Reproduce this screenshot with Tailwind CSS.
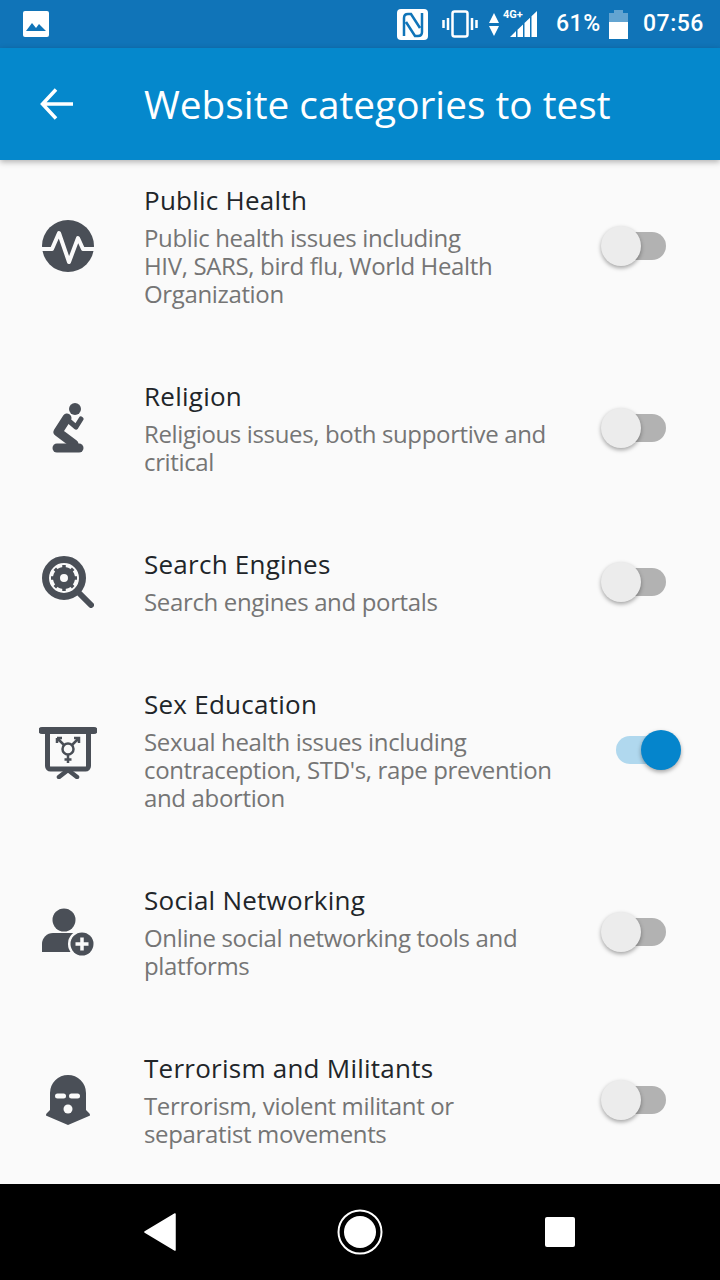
<!DOCTYPE html>
<html lang="en">
<head>
  <meta charset="UTF-8" />
  <meta name="viewport" content="width=device-width, initial-scale=1.0"/>
  <title>Website categories to test</title>
  <script src="https://cdn.jsdelivr.net/npm/@tailwindcss/browser@4"></script>
</head>
<body class="bg-[#fafafa] font-['Open_Sans',sans-serif]">
  <div class="w-[720px] h-[1280px] flex flex-col overflow-hidden">

    <!-- status bar -->
    <div class="h-12 shrink-0 bg-[#1074b8] flex items-center pl-[23px] pr-[17px] text-white font-['Roboto',sans-serif] text-[23px] font-medium tracking-[0.5px]">
      <svg width="26" height="26" viewBox="0 0 26 26"><rect width="26" height="26" rx="2" fill="#fff"/><path d="M3 20l6-8 4 5 3-4 7 7z" fill="#1074b8"/></svg>
      <svg class="ml-auto" width="31" height="31" viewBox="0 0 31 31"><rect width="31" height="31" rx="4" fill="#fff"/><path d="M7 27V9q0-4 4-4h3l9 14M25 4v19q0 4-4 4h-3L9 13" fill="none" stroke="#1074b8" stroke-width="2.500"/></svg>
      <svg class="ml-[14px]" width="36" height="28" viewBox="0 0 36 28"><rect x="10.500" y="1.500" width="15" height="25" rx="2" fill="none" stroke="#fff" stroke-width="2.500"/><path d="M6 8v12M1.500 10v8M30 8v12M34.500 10v8" stroke="#fff" stroke-width="2.500"/></svg>
      <div class="relative ml-[11px] w-12 h-[30px]">
        <svg width="48" height="30" viewBox="0 0 48 30"><path d="M5 4l5 10H0zM5 27l5-10H0z" fill="#fff"/><path d="M21 28l6-6v6zM28.500 20.800V28H34V15.500zM35.500 14v14H41V8.700zM42.500 7.300V28H48V2z" fill="#fff"/></svg>
        <span class="absolute left-[14px] top-[-1px] text-[11px] leading-[13px] font-bold tracking-normal">4G+</span>
      </div>
      <span class="ml-[19px] w-[44px] pt-px whitespace-nowrap">61%</span>
      <svg class="ml-[9px]" width="19" height="29" viewBox="0 0 19 29"><path d="M5 0h9v3h5v9H0V3h5z" fill="#fff" fill-opacity=".35"/><rect y="12" width="19" height="17" fill="#fff"/></svg>
      <span class="ml-[15px] pt-px w-[60px] whitespace-nowrap">07:56</span>
    </div>

    <!-- header -->
    <div class="h-28 shrink-0 bg-[#0588cc] flex items-center shadow-[0_2px_6px_rgba(0,0,0,0.3)] relative z-10">
      <svg class="ml-10" width="34" height="32" viewBox="0 0 34 32" fill="none" stroke="#fff" stroke-width="3.500"><path d="M33 16H3M16 1.500L2.500 16 16 30.500"/></svg>
      <h1 class="ml-[70px] text-white text-[38.8px] font-normal whitespace-nowrap">Website categories to test</h1>
    </div>

    <!-- list -->
    <div class="flex-1 overflow-hidden pt-6">

      <div class="flex items-center pb-[72px]">
        <div class="w-[144px] shrink-0 flex justify-center pr-[8px]">
          <svg width="52" height="52" viewBox="0 0 52 52"><circle cx="26" cy="26" r="26" fill="#4a4f57"/><path d="M0 29h10l7-16 10 29 9-24 5 11h11" fill="none" stroke="#fafafa" stroke-width="4" stroke-linejoin="round"/></svg>
        </div>
        <div class="flex-1">
          <div class="text-[26px] leading-8 tracking-[0.25px] text-[#212529] mb-2">Public Health</div>
          <div class="text-[24px] leading-7 tracking-[-0.35px] text-[#757575]">Public health issues including<br>HIV, SARS, bird flu, World Health<br>Organization</div>
        </div>
        <div class="relative w-[81px] h-10 mr-[39px] shrink-0">
          <div class="absolute left-4 top-1.5 w-[50px] h-7 rounded-full bg-[#b2b2b2]"></div>
          <div class="absolute left-px top-0 size-10 rounded-full bg-[#ececec] shadow-[0_2px_4px_rgba(0,0,0,0.35)]"></div>
        </div>
      </div>

      <div class="flex items-center pb-[72px]">
        <div class="w-[144px] shrink-0 flex justify-center pr-[8px]">
          <svg width="52" height="52" viewBox="0 0 52 52" fill="none" stroke="#4a4f57" stroke-linecap="round" stroke-linejoin="round"><circle cx="33" cy="7" r="6" fill="#4a4f57" stroke="none"/><path d="M25 16L16 30l16 12" stroke-width="9"/><path d="M15 46h22" stroke-width="9"/><path d="M27 19l7 6 5-8" stroke-width="5"/></svg>
        </div>
        <div class="flex-1">
          <div class="text-[26px] leading-8 tracking-[0.25px] text-[#212529] mb-2">Religion</div>
          <div class="text-[24px] leading-7 tracking-[-0.35px] text-[#757575]">Religious issues, both supportive and<br>critical</div>
        </div>
        <div class="relative w-[81px] h-10 mr-[39px] shrink-0">
          <div class="absolute left-4 top-1.5 w-[50px] h-7 rounded-full bg-[#b2b2b2]"></div>
          <div class="absolute left-px top-0 size-10 rounded-full bg-[#ececec] shadow-[0_2px_4px_rgba(0,0,0,0.35)]"></div>
        </div>
      </div>

      <div class="flex items-center pb-[72px]">
        <div class="w-[144px] shrink-0 flex justify-center pr-[8px]">
          <svg width="52" height="52" viewBox="0 0 52 52" fill="none" stroke="#4a4f57" stroke-linecap="round"><circle cx="22" cy="22" r="18.500" stroke-width="7"/><path d="M36 36l13 13" stroke-width="6"/><circle cx="22" cy="22" r="7.500" stroke-width="7"/><path d="M22 9v26M9 22h26M12.800 12.800l18.400 18.400M31.200 12.800L12.800 31.200" stroke-width="3.500" stroke-linecap="butt" stroke-dasharray="4 18"/></svg>
        </div>
        <div class="flex-1">
          <div class="text-[26px] leading-8 tracking-[0.25px] text-[#212529] mb-2">Search Engines</div>
          <div class="text-[24px] leading-7 tracking-[-0.35px] text-[#757575]">Search engines and portals</div>
        </div>
        <div class="relative w-[81px] h-10 mr-[39px] shrink-0">
          <div class="absolute left-4 top-1.5 w-[50px] h-7 rounded-full bg-[#b2b2b2]"></div>
          <div class="absolute left-px top-0 size-10 rounded-full bg-[#ececec] shadow-[0_2px_4px_rgba(0,0,0,0.35)]"></div>
        </div>
      </div>

      <div class="flex items-center pb-[72px]">
        <div class="w-[144px] shrink-0 flex justify-center pr-[8px]">
          <svg class="mt-1" width="58" height="54" viewBox="0 0 58 54" fill="none" stroke="#4a4f57" stroke-linecap="round"><path d="M3 5.500h52" stroke-width="7"/><path d="M8.500 6v35a3 3 0 0 0 3 3h35a3 3 0 0 0 3-3V6" stroke-width="5"/><path d="M29 45l-9 7M29 45l9 7" stroke-width="4.500"/><circle cx="29" cy="24" r="5.500" stroke-width="2.500"/><path d="M29 30v8M25.500 34.500h7M33 20l6-6M35 13h5v5M25 20l-6-6M18 13h5M18 13v5" stroke-width="2.500" stroke-linecap="butt"/></svg>
        </div>
        <div class="flex-1">
          <div class="text-[26px] leading-8 tracking-[0.25px] text-[#212529] mb-2">Sex Education</div>
          <div class="text-[24px] leading-7 tracking-[-0.35px] text-[#757575]">Sexual health issues including<br>contraception, STD's, rape prevention<br>and abortion</div>
        </div>
        <div class="relative w-[81px] h-10 mr-[39px] shrink-0">
          <div class="absolute left-4 top-1.5 w-[50px] h-7 rounded-full bg-[#b0d8ee]"></div>
          <div class="absolute right-0 top-0 size-10 rounded-full bg-[#0585cc] shadow-[0_2px_4px_rgba(0,0,0,0.35)]"></div>
        </div>
      </div>

      <div class="flex items-center pb-[72px]">
        <div class="w-[144px] shrink-0 flex justify-center pr-[8px]">
          <svg class="mt-1" width="52" height="52" viewBox="0 0 52 52"><circle cx="22" cy="12" r="11.500" fill="#4a4f57"/><path d="M0 44v-8a11 11 0 0 1 11-11h24v19z" fill="#4a4f57"/><circle cx="40" cy="36" r="14" fill="#fafafa"/><circle cx="40" cy="36" r="11.500" fill="#4a4f57"/><path d="M40 29.500v13M33.500 36h13" stroke="#fafafa" stroke-width="3.500"/></svg>
        </div>
        <div class="flex-1">
          <div class="text-[26px] leading-8 tracking-[0.25px] text-[#212529] mb-2">Social Networking</div>
          <div class="text-[24px] leading-7 tracking-[-0.35px] text-[#757575]">Online social networking tools and<br>platforms</div>
        </div>
        <div class="relative w-[81px] h-10 mr-[39px] shrink-0">
          <div class="absolute left-4 top-1.5 w-[50px] h-7 rounded-full bg-[#b2b2b2]"></div>
          <div class="absolute left-px top-0 size-10 rounded-full bg-[#ececec] shadow-[0_2px_4px_rgba(0,0,0,0.35)]"></div>
        </div>
      </div>

      <div class="flex items-center pb-[72px]">
        <div class="w-[144px] shrink-0 flex justify-center pr-[8px]">
          <svg width="44" height="50" viewBox="0 0 44 50"><path d="M4 18a18 18 0 0 1 36 0v17l3 3q1 1 1 2t-1 1L22 50 1 41q-1 0-1-1t1-2l3-3z" fill="#4a4f57"/><rect x="9" y="18.500" width="11" height="5" rx="2.500" fill="#fafafa"/><rect x="23" y="18.500" width="11" height="5" rx="2.500" fill="#fafafa"/><circle cx="22" cy="34" r="4.500" fill="#fafafa"/></svg>
        </div>
        <div class="flex-1">
          <div class="text-[26px] leading-8 tracking-[0.25px] text-[#212529] mb-2">Terrorism and Militants</div>
          <div class="text-[24px] leading-7 tracking-[-0.35px] text-[#757575]">Terrorism, violent militant or<br>separatist movements</div>
        </div>
        <div class="relative w-[81px] h-10 mr-[39px] shrink-0">
          <div class="absolute left-4 top-1.5 w-[50px] h-7 rounded-full bg-[#b2b2b2]"></div>
          <div class="absolute left-px top-0 size-10 rounded-full bg-[#ececec] shadow-[0_2px_4px_rgba(0,0,0,0.35)]"></div>
        </div>
      </div>

    </div>

    <!-- nav bar -->
    <div class="h-24 shrink-0 bg-black flex items-center">
      <svg class="ml-[144px]" width="32" height="38" viewBox="0 0 32 38"><path d="M31 1L1 19l30 18z" fill="#fff" stroke="#fff" stroke-width="1.500" stroke-linejoin="round"/></svg>
      <svg class="ml-[161px]" width="46" height="46" viewBox="0 0 46 46"><circle cx="23" cy="23" r="21.500" fill="none" stroke="#fff" stroke-width="2"/><circle cx="23" cy="23" r="16" fill="#fff"/></svg>
      <div class="ml-[162px] size-[30px] rounded-[2px] bg-white"></div>
    </div>
  </div>
</body>
</html>
